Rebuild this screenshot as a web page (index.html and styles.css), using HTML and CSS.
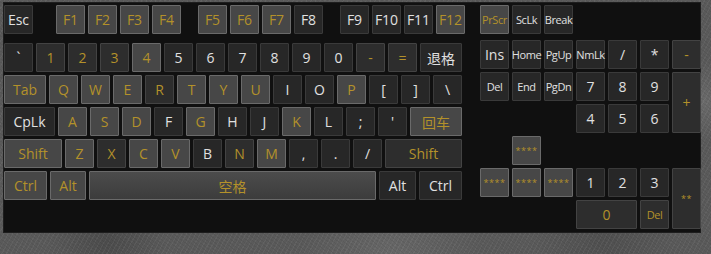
FILE: index.html
```html
<!DOCTYPE html>
<html lang="zh">
<head>
    <meta charset="UTF-8">
    <title>屏幕键盘</title>
    <link rel="stylesheet" href="styles.css">
</head>
<body>
    <div class="board">
        <div class="main">
            <div class="row fn">
                <div class="key esc">Esc</div>
                <div class="group">
                    <div class="key lit">F1</div>
                    <div class="key lit">F2</div>
                    <div class="key lit">F3</div>
                    <div class="key lit">F4</div>
                </div>
                <div class="group">
                    <div class="key lit">F5</div>
                    <div class="key lit">F6</div>
                    <div class="key lit">F7</div>
                    <div class="key">F8</div>
                </div>
                <div class="group">
                    <div class="key">F9</div>
                    <div class="key">F10</div>
                    <div class="key">F11</div>
                    <div class="key lit">F12</div>
                </div>
            </div>
            <div class="row">
                <div class="key">`</div>
                <div class="key gold">1</div>
                <div class="key gold">2</div>
                <div class="key gold">3</div>
                <div class="key lit">4</div>
                <div class="key">5</div>
                <div class="key">6</div>
                <div class="key">7</div>
                <div class="key">8</div>
                <div class="key">9</div>
                <div class="key">0</div>
                <div class="key gold">-</div>
                <div class="key gold">=</div>
                <div class="key grow cjk">退格</div>
            </div>
            <div class="row">
                <div class="key lit grow">Tab</div>
                <div class="key lit">Q</div>
                <div class="key lit">W</div>
                <div class="key lit">E</div>
                <div class="key gold">R</div>
                <div class="key lit">T</div>
                <div class="key lit">Y</div>
                <div class="key lit">U</div>
                <div class="key">I</div>
                <div class="key">O</div>
                <div class="key lit">P</div>
                <div class="key">[</div>
                <div class="key">]</div>
                <div class="key">\</div>
            </div>
            <div class="row">
                <div class="key caps">CpLk</div>
                <div class="key lit">A</div>
                <div class="key lit">S</div>
                <div class="key lit">D</div>
                <div class="key">F</div>
                <div class="key lit">G</div>
                <div class="key">H</div>
                <div class="key">J</div>
                <div class="key lit">K</div>
                <div class="key">L</div>
                <div class="key">;</div>
                <div class="key">'</div>
                <div class="key lit grow cjk">回车</div>
            </div>
            <div class="row">
                <div class="key lit shift">Shift</div>
                <div class="key lit">Z</div>
                <div class="key gold">X</div>
                <div class="key lit">C</div>
                <div class="key lit">V</div>
                <div class="key">B</div>
                <div class="key gold">N</div>
                <div class="key lit">M</div>
                <div class="key">,</div>
                <div class="key">.</div>
                <div class="key">/</div>
                <div class="key gold grow">Shift</div>
            </div>
            <div class="row">
                <div class="key lit ctrl">Ctrl</div>
                <div class="key lit alt">Alt</div>
                <div class="key lit space grow cjk">空格</div>
                <div class="key alt-r">Alt</div>
                <div class="key ctrl">Ctrl</div>
            </div>
        </div>

        <div class="side">
            <div class="row fn">
                <div class="key lit small">PrScr</div>
                <div class="key small">ScLk</div>
                <div class="key small">Break</div>
            </div>
            <div class="pad">
                <div class="key">Ins</div>
                <div class="key small">Home</div>
                <div class="key small">PgUp</div>
                <div class="key small">NmLk</div>
                <div class="key">/</div>
                <div class="key">*</div>
                <div class="key gold">-</div>

                <div class="key small">Del</div>
                <div class="key small">End</div>
                <div class="key small">PgDn</div>
                <div class="key">7</div>
                <div class="key">8</div>
                <div class="key">9</div>
                <div class="key gold tall">+</div>

                <div class="key c4">4</div>
                <div class="key">5</div>
                <div class="key">6</div>

                <div class="key lit stars c2">****</div>

                <div class="key lit stars c1">****</div>
                <div class="key lit stars">****</div>
                <div class="key lit stars">****</div>
                <div class="key">1</div>
                <div class="key">2</div>
                <div class="key">3</div>
                <div class="key gold stars tall">**</div>

                <div class="key gold zero">0</div>
                <div class="key gold small">Del</div>
            </div>
        </div>
    </div>
</body>
</html>
```

FILE: styles.css
```css
body {
    margin: 0;
    width: 711px;
    height: 254px;
    overflow: hidden;
    font-family: "Open Sans", "Noto Sans CJK SC", sans-serif;
    background-color: #5a5a5a;
    background-image:
        repeating-linear-gradient(37deg, rgba(0, 0, 0, 0.06) 0 1px, transparent 1px 3px),
        repeating-linear-gradient(-61deg, rgba(255, 255, 255, 0.05) 0 1px, transparent 1px 4px),
        radial-gradient(circle at 15% 95%, #4c4c4c 0, transparent 60px),
        radial-gradient(circle at 55% 100%, #676767 0, transparent 90px),
        radial-gradient(circle at 85% 95%, #505050 0, transparent 70px),
        radial-gradient(circle at 99% 40%, #6a6a6a 0, transparent 40px);
}

.board {
    display: flex;
    width: 698px;
    height: 231px;
    box-sizing: border-box;
    margin: 2px 0 0 3px;
    padding: 2px 0 0 0;
    background-color: #101010;
    border: 1px solid #1e1e1e;
}

.main {
    display: flex;
    flex-direction: column;
    gap: 3px;
    width: 458px;
}

.side {
    display: flex;
    flex-direction: column;
    margin-left: 18px;
}

.row {
    display: flex;
    gap: 3px;
}

.row.fn {
    margin-bottom: 6px;
}

.group {
    display: flex;
    gap: 3px;
    margin-left: 14px;
}

.esc {
    margin-right: 6px;
}

.pad {
    display: grid;
    grid-template-columns: repeat(7, 29px);
    grid-auto-rows: 29px;
    gap: 3px;
}

.key {
    box-sizing: border-box;
    width: 29px;
    height: 29px;
    flex: none;
    display: flex;
    align-items: center;
    justify-content: center;
    background-color: #272727;
    border: 1px solid #3a3a3a;
    border-radius: 1px;
    color: #e0e0e0;
    font-size: 14px;
}

.key.gold {
    color: #b3912a;
    background-color: #2d2d2d;
    border-color: #434343;
}

.key.lit {
    color: #b3912a;
    background-color: #474747;
    border-color: #6a6a6a;
}

.key.grow {
    flex: 1;
    width: auto;
}

.key.cjk {
    font-family: "Noto Sans CJK SC", sans-serif;
    font-size: 14px;
}

.key.small {
    font-size: 11px;
    letter-spacing: -0.4px;
}

.key.stars {
    font-size: 9px;
    letter-spacing: 0.5px;
}

.caps { width: 51px; }
.shift { width: 58px; }
.ctrl { width: 43px; }
.alt { width: 36px; }
.alt-r { width: 37px; }

.key.space {
    background-image: linear-gradient(#4c4c4c, #3c3c3c);
}

.pad .tall {
    grid-row: span 2;
    height: auto;
}

.pad .zero {
    grid-column: 4 / span 2;
    width: auto;
}

.pad .c4 { grid-column: 4; }
.pad .c2 { grid-column: 2; }
.pad .c1 { grid-column: 1; }
```
